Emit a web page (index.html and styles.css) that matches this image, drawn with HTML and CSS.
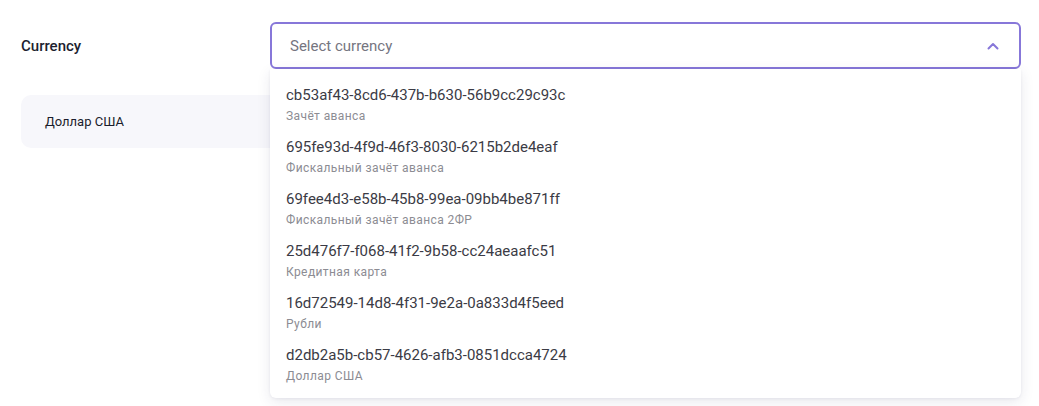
FILE: index.html
```html
<!DOCTYPE html>
<html>
<head>
<meta charset="utf-8">
<link rel="stylesheet" href="styles.css">
</head>
<body>
<div class="page">
  <div class="field">
    <div class="label">Currency</div>
    <div class="select-wrap">
      <div class="select">
        <span class="placeholder">Select currency</span>
        <svg class="chevron" width="12" height="8" viewBox="0 0 12 8"><path d="M1.5 6.5 L6 2 L10.5 6.5" fill="none" stroke="#8777d9" stroke-width="2" stroke-linecap="round" stroke-linejoin="round"/></svg>
      </div>
      <div class="dropdown">
        <div class="option"><div class="opt-id">cb53af43-8cd6-437b-b630-56b9cc29c93c</div><div class="opt-name">Зачёт аванса</div></div>
        <div class="option"><div class="opt-id">695fe93d-4f9d-46f3-8030-6215b2de4eaf</div><div class="opt-name">Фискальный зачёт аванса</div></div>
        <div class="option"><div class="opt-id">69fee4d3-e58b-45b8-99ea-09bb4be871ff</div><div class="opt-name">Фискальный зачёт аванса 2ФР</div></div>
        <div class="option"><div class="opt-id">25d476f7-f068-41f2-9b58-cc24aeaafc51</div><div class="opt-name">Кредитная карта</div></div>
        <div class="option"><div class="opt-id">16d72549-14d8-4f31-9e2a-0a833d4f5eed</div><div class="opt-name">Рубли</div></div>
        <div class="option"><div class="opt-id">d2db2a5b-cb57-4626-afb3-0851dcca4724</div><div class="opt-name">Доллар США</div></div>
      </div>
    </div>
  </div>
  <div class="card">Доллар США</div>
</div>
</body>
</html>
```
FILE: styles.css
```css
* { box-sizing: border-box; }
html, body { margin: 0; padding: 0; background: #fff; }
body { font-family: Roboto, "Noto Sans", sans-serif; color: #1e2032; min-height: 406px; }
.page { padding: 22px 18px 0 21px; }
.field { display: flex; align-items: flex-start; }
.label {
  width: 249px;
  height: 47px;
  display: flex;
  align-items: center;
  font-size: 15px;
  font-weight: 500;
  color: #1d1f30;
}
.select-wrap { flex: 1; position: relative; }
.select {
  height: 47px;
  border: 2px solid #8777d9;
  border-radius: 6px;
  display: flex;
  align-items: center;
  justify-content: space-between;
  padding: 0 20px 0 18px;
  background: #fff;
}
.placeholder { font-size: 15px; color: #75757f; }
.chevron { display: block; }
.dropdown {
  position: absolute;
  left: 0;
  right: 0;
  top: 47px;
  background: #fff;
  border-radius: 0 0 6px 6px;
  box-shadow: 0 4px 14px rgba(40, 40, 90, 0.10), 0 1px 3px rgba(40, 40, 90, 0.06);
  padding: 8px 0 9px;
  z-index: 2;
}
.option { padding: 8px 16px 5px; }
.opt-id { font-size: 15px; line-height: 20px; color: #3b3b45; }
.opt-name { font-size: 12px; line-height: 16px; margin-top: 3px; color: #8c8c93; letter-spacing: 0.4px; }
.card {
  margin-top: 26px;
  width: 400px;
  height: 53px;
  background: #f7f7fb;
  border-radius: 10px;
  display: flex;
  align-items: center;
  padding-left: 24px;
  font-size: 13px;
  color: #1b1d2c;
}
```
